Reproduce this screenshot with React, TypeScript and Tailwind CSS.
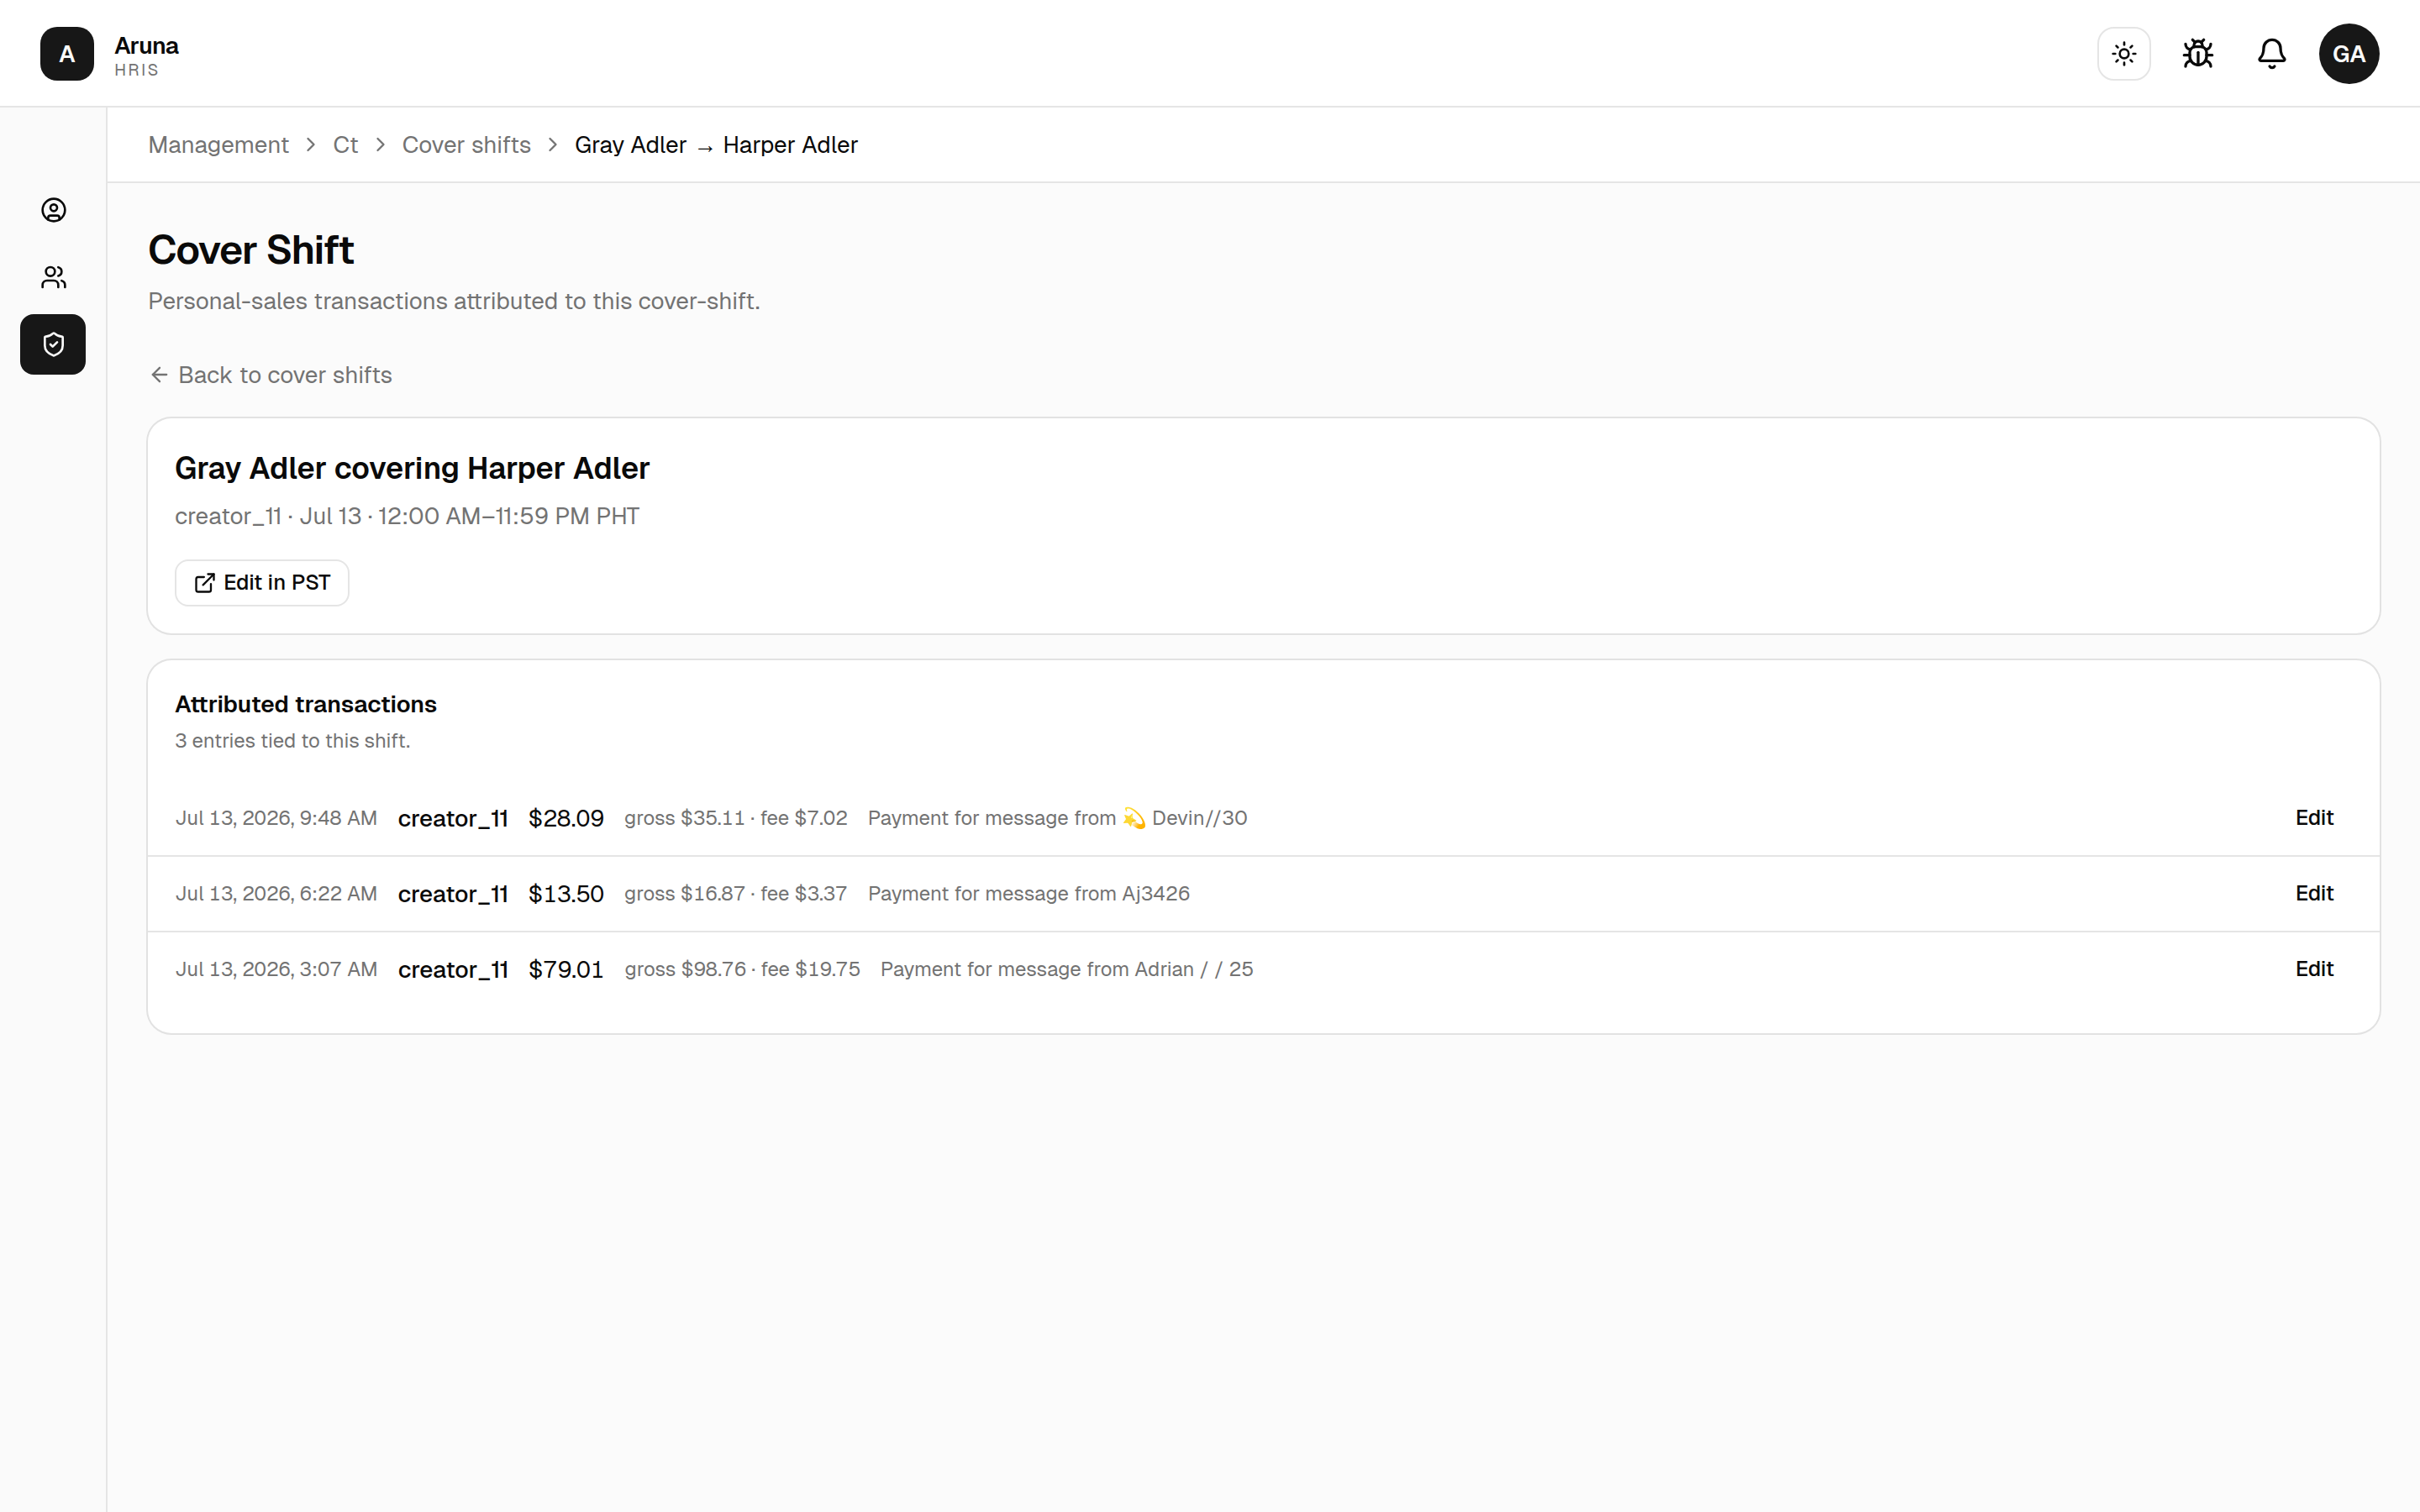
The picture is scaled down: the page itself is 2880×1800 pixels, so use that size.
import React from 'react';
import {
  ArrowLeft,
  Bell,
  Bug,
  ChevronRight,
  CircleUser,
  ExternalLink,
  ShieldCheck,
  Sun,
  Users,
} from 'lucide-react';

const crumbs = ['Management', 'Ct', 'Cover shifts'];

const transactions = [
  {
    id: 1,
    date: 'Jul 13, 2026, 9:48 AM',
    creator: 'creator_11',
    net: '$28.09',
    breakdown: 'gross $35.11 · fee $7.02',
    note: 'Payment for message from 💫 Devin//30',
  },
  {
    id: 2,
    date: 'Jul 13, 2026, 6:22 AM',
    creator: 'creator_11',
    net: '$13.50',
    breakdown: 'gross $16.87 · fee $3.37',
    note: 'Payment for message from Aj3426',
  },
  {
    id: 3,
    date: 'Jul 13, 2026, 3:07 AM',
    creator: 'creator_11',
    net: '$79.01',
    breakdown: 'gross $98.76 · fee $19.75',
    note: 'Payment for message from Adrian / / 25',
  },
];

const Header: React.FC = () => {
  return (
    <header className="flex h-32 items-center justify-between border-b-2 border-[#e5e5e5] bg-white px-12 pt-0.5">
      <div className="flex items-center gap-6">
        <div className="flex size-16 items-center justify-center rounded-[20px] bg-[#171717] text-[28px] font-semibold text-[#fafafa]">
          A
        </div>
        <div className="pt-0.5">
          <p className="text-[28px] leading-[35px] font-semibold tracking-tight">Aruna</p>
          <p className="mt-px text-[20px] leading-[20px] tracking-[0.12em] text-[#737373]">HRIS</p>
        </div>
      </div>

      <div className="flex items-center gap-6">
        <button className="flex size-16 items-center justify-center rounded-[20px] border-2 border-[#e5e5e5] bg-white">
          <Sun size={32} />
        </button>
        <button className="flex size-16 items-center justify-center">
          <Bug size={40} />
        </button>
        <button className="flex size-16 items-center justify-center">
          <Bell size={40} />
        </button>
        <div className="flex size-18 items-center justify-center rounded-full bg-[#171717] text-[28px] font-semibold text-[#fafafa]">
          GA
        </div>
      </div>
    </header>
  );
};

const Sidebar: React.FC = () => {
  return (
    <aside className="flex w-32 shrink-0 flex-col gap-2 border-r-2 border-[#e5e5e5] bg-[#fafafa] px-6 pt-[86px]">
      <a href="#" className="flex h-18 items-center rounded-[16px] pl-6">
        <CircleUser size={32} />
      </a>
      <a href="#" className="flex h-18 items-center rounded-[16px] pl-6">
        <Users size={32} />
      </a>
      <a href="#" className="flex h-18 items-center rounded-[16px] bg-[#171717] pl-6 text-[#fafafa]">
        <ShieldCheck size={32} />
      </a>
    </aside>
  );
};

const Breadcrumb: React.FC = () => {
  return (
    <nav className="flex h-[90px] items-center gap-3 border-b-2 border-[#e5e5e5] bg-white px-12 text-[28px] leading-[40px] text-[#737373]">
      {crumbs.map((crumb) => (
        <React.Fragment key={crumb}>
          <a href="#">{crumb}</a>
          <ChevronRight size={28} />
        </React.Fragment>
      ))}
      <span className="text-[#0a0a0a]">
        Gray Adler <span className="font-['Liberation_Sans',sans-serif]">→</span> Harper Adler
      </span>
    </nav>
  );
};

const ShiftCard: React.FC = () => {
  return (
    <section className="rounded-[28px] bg-white p-8 ring-2 ring-[#0a0a0a]/10">
      <h2 className="text-[36px] leading-[56px] font-semibold">Gray Adler covering Harper Adler</h2>
      <p className="mt-2 text-[28px] leading-[40px] text-[#737373]">
        creator_11 · Jul 13 · 12:00 AM–11:59 PM PHT
      </p>
      <button className="mt-8 flex h-14 items-center gap-2 rounded-[16px] border-2 border-[#e5e5e5] bg-white pr-[21px] pl-5 text-[25.6px] font-medium">
        <ExternalLink size={28} />
        <span className="pb-0.5">Edit in PST</span>
      </button>
    </section>
  );
};

const TransactionsCard: React.FC = () => {
  return (
    <section className="rounded-[28px] bg-white py-8 ring-2 ring-[#0a0a0a]/10">
      <div className="px-8">
        <h3 className="text-[28px] leading-[40px] font-semibold">Attributed transactions</h3>
        <p className="mt-2 text-[24px] leading-[32px] [word-spacing:-0.2px] text-[#737373]">
          3 entries tied to this shift.
        </p>
      </div>

      <ul className="mt-8 divide-y-2 divide-[#e5e5e5]">
        {transactions.map((tx) => (
          <li key={tx.id} className="flex items-center gap-6 px-8 py-4 text-[24px] text-[#737373]">
            <span className="tabular-nums">{tx.date}</span>
            <span className="-mr-px text-[28px] font-medium text-[#0a0a0a]">{tx.creator}</span>
            <span className="text-[28px] text-[#0a0a0a] tabular-nums">{tx.net}</span>
            <span className="tabular-nums">{tx.breakdown}</span>
            <span>{tx.note}</span>
            <button className="ml-auto h-14 border-2 border-transparent px-5 pb-0.5 text-[25.6px] font-medium text-[#0a0a0a]">
              Edit
            </button>
          </li>
        ))}
      </ul>
    </section>
  );
};

export default function App() {
  return (
    <div className="flex min-h-screen flex-col bg-[#fbfbfb] font-['Geist','Inter',sans-serif] text-[#0a0a0a]">
      <Header />
      <div className="flex flex-1">
        <Sidebar />
        <div className="flex-1">
          <Breadcrumb />
          <main className="p-12">
            <h1 className="text-[48px] leading-[62px] font-semibold tracking-tight">Cover Shift</h1>
            <p className="mt-2.5 text-[28px] leading-[40px] [word-spacing:-0.15px] text-[#737373]">
              Personal-sales transactions attributed to this cover-shift.
            </p>
            <a href="#" className="mt-12 flex w-fit items-center gap-2 text-[28px] leading-[40px] text-[#737373]">
              <ArrowLeft size={28} />
              Back to cover shifts
            </a>
            <div className="mt-8 flex flex-col gap-8">
              <ShiftCard />
              <TransactionsCard />
            </div>
          </main>
        </div>
      </div>
    </div>
  );
}
